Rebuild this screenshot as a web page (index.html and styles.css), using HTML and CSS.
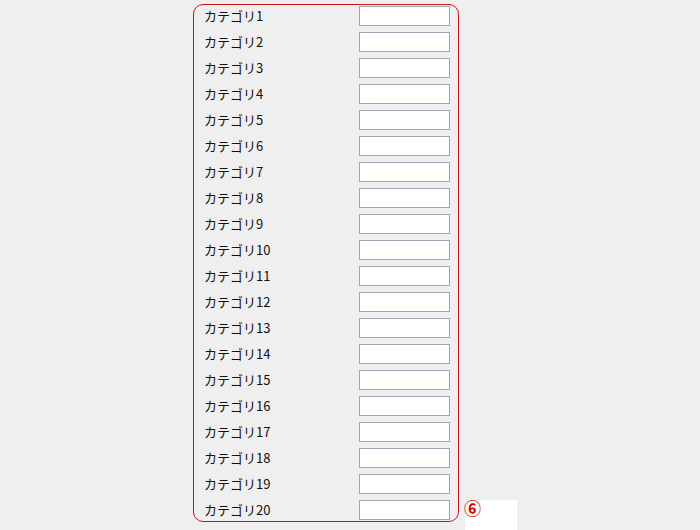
FILE: index.html
```html
<!DOCTYPE html>
<html>
<head>
  <title>カテゴリ設定</title>
  <link rel="stylesheet" href="styles.css">
</head>
<body>
  <div class="page">
    <div class="category-box" id="category-box"></div>
    <div class="note">
      <span class="mark">⑥</span>
    </div>
  </div>

  <script>
    // カテゴリ1〜20 の行を作る
    const box = document.getElementById("category-box");
    for (let i = 1; i <= 20; i++) {
      const row = document.createElement("div");
      row.className = "row";
      row.innerHTML = `
        <span class="label">カテゴリ${i}</span>
        <input type="text" class="field">
      `;
      box.appendChild(row);
    }
  </script>
</body>
</html>
```

FILE: styles.css
```css
/* カテゴリ入力欄 */
html, body {
  margin: 0;
  padding: 0;
  height: 100%;
  overflow: hidden;
}

body {
  background-color: #efefef;
  font-family: "Noto Sans CJK JP", "DejaVu Sans", sans-serif;
  font-size: 13px;
  color: #111;
}

.page {
  display: flex;
  align-items: flex-start;
  height: 100%;
  box-sizing: border-box;
  padding: 4px 0 0 193px;
}

.category-box {
  width: 246px;
  padding: 1px 8px 1px 10px;
  border: 1px solid #d0121b;
  border-radius: 10px;
  display: flex;
  flex-direction: column;
  gap: 6px;
}

.row {
  display: flex;
  justify-content: space-between;
  align-items: center;
  height: 20px;
}

.label {
  line-height: 20px;
}

.field {
  box-sizing: border-box;
  width: 91px;
  height: 20px;
  margin: 0;
  padding: 0 2px;
  border: 1px solid #9ba6b5;
  background-color: #fff;
}

.note {
  position: relative;
  align-self: flex-end;
  width: 52px;
  height: 30px;
  margin-left: 6px;
  background-color: #fff;
}

.mark {
  position: absolute;
  left: -1px;
  top: 0;
  color: #d40000;
  font-family: "Noto Sans CJK JP", sans-serif;
  font-size: 17px;
  font-weight: bold;
  line-height: 16px;
}
```
